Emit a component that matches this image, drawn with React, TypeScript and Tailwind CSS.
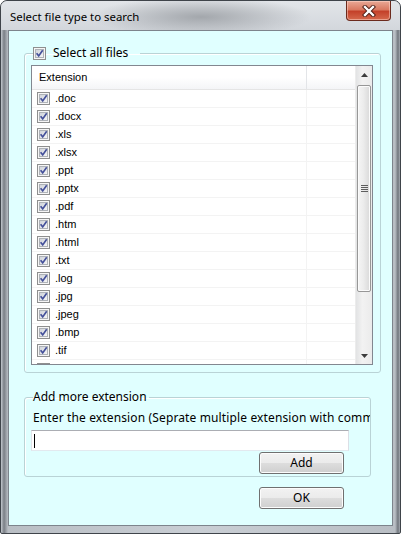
import React from "react";

const exts = [".doc", ".docx", ".xls", ".xlsx", ".ppt", ".pptx", ".pdf", ".htm", ".html", ".txt", ".log", ".jpg", ".jpeg", ".bmp", ".tif"];

const Check = () => (
  <svg width="13" height="13" viewBox="0 0 13 13" className="block shrink-0">
    <defs>
      <linearGradient id="cbg" x1="0" y1="0" x2="1" y2="1">
        <stop offset="0" stopColor="#cdd1d8" />
        <stop offset="1" stopColor="#f8f8f8" />
      </linearGradient>
    </defs>
    <rect x="0.5" y="0.5" width="12" height="12" fill="#f6f6f6" stroke="#8e8f8f" />
    <rect x="2.5" y="2.5" width="8" height="8" fill="url(#cbg)" stroke="#aeb2b8" />
    <path d="M3.6 6.3 L5.7 8.9 L9.7 3.3" fill="none" stroke="#44509a" strokeWidth="1.7" />
  </svg>
);

const Btn = ({ label }: { label: string }) => (
  <div className="w-[85px] h-[22px] rounded-[3px] border border-[#707070] bg-[linear-gradient(180deg,#f2f2f2_0%,#ebebeb_50%,#dddddd_51%,#cfcfcf_100%)] shadow-[inset_0_0_0_1px_#fcfcfc] flex items-center justify-center text-[12px] text-black">
    {label}
  </div>
);

export default function App() {
  return (
    <div
      className="w-[401px] h-[534px] flex flex-col border border-[#3f444a] rounded-t-[7px] rounded-b-[2px] overflow-hidden bg-[linear-gradient(90deg,#c3c8ce_0px,#7a7f86_3px,#b9bec4_7px,#c9ced4_50%,#b9bec4_394px,#70757c_397px,#c3c8ce_400px)]"
      style={{ fontFamily: '"Noto Sans", "Open Sans", sans-serif' }}
    >
      {/* title bar */}
      <div className="h-[29px] shrink-0 flex items-start justify-between bg-[radial-gradient(ellipse_110px_20px_at_200px_16px,#a3a7ac,transparent),linear-gradient(180deg,#e2e5e9_0%,#d3d7dc_100%)]">
        <div className="pl-[9px] pt-[8px] text-[11.4px] leading-[16px] text-black">Select file type to search</div>
        <div className="mr-[9px] w-[45px] h-[20px] rounded-b-[4px] border border-t-0 border-[#6b2a1d] bg-[linear-gradient(180deg,#e9a996_0%,#d97a62_45%,#c4412a_55%,#d5694d_100%)] shadow-[inset_0_0_0_1px_rgba(255,220,210,0.5)] flex items-center justify-center">
          <svg width="14" height="12" viewBox="0 0 14 12">
            <path d="M3 2 L11 10 M11 2 L3 10" stroke="#4a1a12" strokeWidth="4.2" strokeLinecap="square" />
            <path d="M3 2 L11 10 M11 2 L3 10" stroke="#ffffff" strokeWidth="2.4" strokeLinecap="square" />
          </svg>
        </div>
      </div>

      {/* client area */}
      <div className="flex-1 mx-[7px] mb-[7px] border border-[#7d848c] bg-[#e0ffff] flex flex-col">
        {/* group 1 */}
        <fieldset className="min-w-0 ml-[15px] mt-[15px] w-[357px] border border-[#b9d3d6] rounded-[3px] pl-[6px] pb-[7px] shadow-[inset_1px_1px_0_#ffffff]">
          <legend className="ml-[2px] pr-[12px]">
            <span className="flex items-center gap-[7px] h-[14px]">
              <Check />
              <span className="text-[12px] leading-[14px] text-black">Select all files</span>
            </span>
          </legend>
          <div className="mt-[5px] w-[342px] h-[300px] border border-[#828790] bg-white flex overflow-hidden">
            <div className="flex-1 flex flex-col overflow-hidden" style={{ fontFamily: '"Liberation Sans", Arial, sans-serif' }}>
              <div className="h-[24px] shrink-0 flex border-b border-[#e5e5e5] bg-[linear-gradient(180deg,#ffffff_0%,#ffffff_50%,#f4f5f7_100%)]">
                <div className="w-[275px] border-r border-[#e3e5e8] pl-[7px] flex items-center text-[11px] text-black">Extension</div>
                <div className="flex-1" />
              </div>
              {exts.map((e) => (
                <div key={e} className="h-[18px] shrink-0 flex border-b border-[#f3f3f3]">
                  <div className="w-[275px] border-r border-[#f3f3f3] pl-[5px] flex items-center gap-[5px] text-[11px] text-black">
                    <Check />
                    <span>{e}</span>
                  </div>
                  <div className="flex-1" />
                </div>
              ))}
              <div className="h-[18px] shrink-0 flex">
                <div className="w-[275px] border-r border-[#f3f3f3] pl-[5px] pt-[3px]">
                  <Check />
                </div>
              </div>
            </div>
            {/* scrollbar */}
            <div className="w-[17px] shrink-0 flex flex-col bg-[linear-gradient(90deg,#e2e3e4_0%,#f2f2f2_40%,#ebebeb_100%)] border-l border-[#ececec]">
              <div className="h-[17px] shrink-0 flex items-center justify-center">
                <svg width="7" height="4" viewBox="0 0 7 4"><path d="M0 4 L3.5 0 L7 4 Z" fill="#3c3c3c" /></svg>
              </div>
              <div className="mt-[2px] mx-[1px] h-[207px] rounded-[2px] border border-[#979797] bg-[linear-gradient(90deg,#f5f5f5_0%,#ececec_45%,#d9d9d9_100%)] shadow-[inset_0_0_0_1px_#fbfbfb] flex items-center justify-center">
                <div className="flex flex-col gap-[1px]">
                  <div className="w-[7px] h-[1px] bg-[#5e5e5e]" />
                  <div className="w-[7px] h-[1px] bg-[#5e5e5e]" />
                  <div className="w-[7px] h-[1px] bg-[#5e5e5e]" />
                  <div className="w-[7px] h-[1px] bg-[#5e5e5e]" />
                </div>
              </div>
              <div className="flex-1" />
              <div className="h-[17px] shrink-0 flex items-center justify-center">
                <svg width="7" height="4" viewBox="0 0 7 4"><path d="M0 0 L3.5 4 L7 0 Z" fill="#3c3c3c" /></svg>
              </div>
            </div>
          </div>
        </fieldset>

        {/* group 2 */}
        <fieldset className="min-w-0 ml-[15px] mt-[16px] w-[347px] border border-[#b9d3d6] rounded-[3px] pl-[6px] pb-[2px] shadow-[inset_1px_1px_0_#ffffff] overflow-hidden">
          <legend className="ml-[2px] pr-[2px] text-[12px] leading-[16px] text-black">Add more extension</legend>
          <div className="mt-[5px] pl-[2px] h-[16px] text-[12px] leading-[16px] tracking-[0.13px] text-black whitespace-nowrap overflow-hidden">
            Enter the extension (Seprate multiple extension with comma)
          </div>
          <div className="mt-[4px] w-[318px] h-[21px] bg-white border border-[#abadb3] border-l-[#e2e3ea] border-r-[#dbdfe6] border-b-[#e3e9ef] flex items-center">
            <div className="ml-[2px] w-[1px] h-[14px] bg-black" />
          </div>
          <div className="mt-[1px] ml-[228px]">
            <Btn label="Add" />
          </div>
        </fieldset>

        <div className="mt-[10px] ml-[250px]">
          <Btn label="OK" />
        </div>
      </div>
    </div>
  );
}
